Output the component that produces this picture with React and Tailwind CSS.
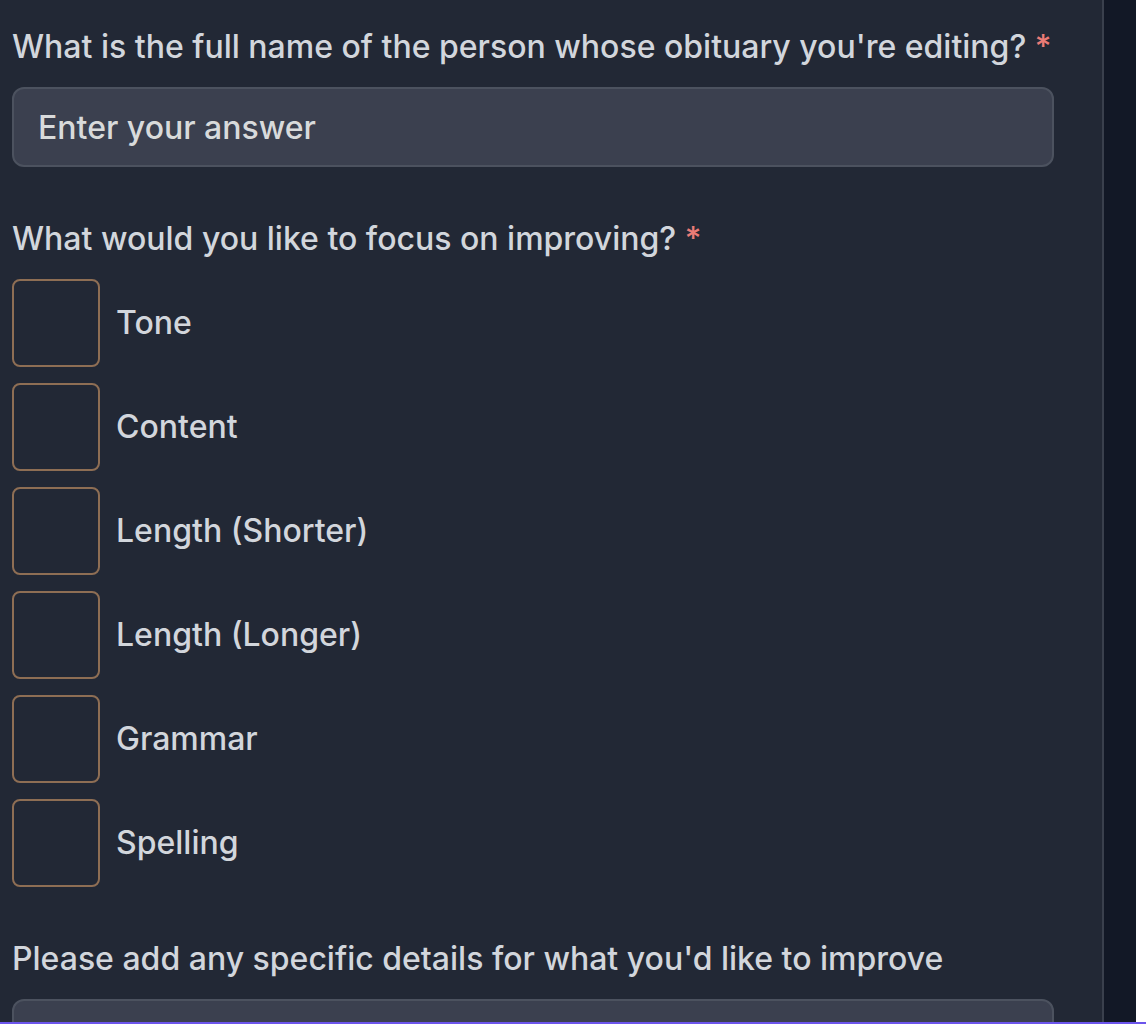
const OPTIONS = [
  "Tone",
  "Content",
  "Length (Shorter)",
  "Length (Longer)",
  "Grammar",
  "Spelling",
];

function Required() {
  return <span className="text-[#ea7b76]">*</span>;
}

function CheckOption({ label }) {
  return (
    <label className="flex items-center gap-4">
      <input
        type="checkbox"
        name="focus"
        className="size-22 shrink-0 appearance-none rounded-lg border-2 border-[#8e6e54] checked:bg-[#8e6e54]"
      />
      {label}
    </label>
  );
}

export default function App() {
  return (
    <div className="flex h-screen overflow-hidden border-b-2 border-[#6c55ec] bg-white pr-2.5 font-['Inter',sans-serif] text-[32px] leading-12 font-medium text-[#d2d6dc]">
      <div className="flex min-w-0 flex-1 bg-[#121826] pr-8">
        <form className="flex min-w-0 flex-1 flex-col gap-12 border-r-2 border-[#3a404d] bg-[#222835] pt-[23px] pr-12 pl-3">
          <div className="flex flex-col gap-4">
            <label htmlFor="full-name">
              What is the full name of the person whose obituary you're editing? <Required />
            </label>
            <input
              id="full-name"
              type="text"
              placeholder="Enter your answer"
              className="h-20 w-full rounded-xl border-2 border-[#4c525f] bg-[#3b404f] px-6 placeholder:text-[#d8dadb]"
            />
          </div>

          <fieldset>
            <legend className="mb-4">
              What would you like to focus on improving? <Required />
            </legend>
            <div className="flex flex-col gap-4">
              {OPTIONS.map((option) => (
                <CheckOption key={option} label={option} />
              ))}
            </div>
          </fieldset>

          <div className="flex flex-col gap-4">
            <label htmlFor="details">
              Please add any specific details for what you'd like to improve
            </label>
            <textarea
              id="details"
              rows={3}
              className="w-full resize-none rounded-xl border-2 border-[#4c525f] bg-[#3b404f] px-6 py-4"
            />
          </div>
        </form>
      </div>
    </div>
  );
}
